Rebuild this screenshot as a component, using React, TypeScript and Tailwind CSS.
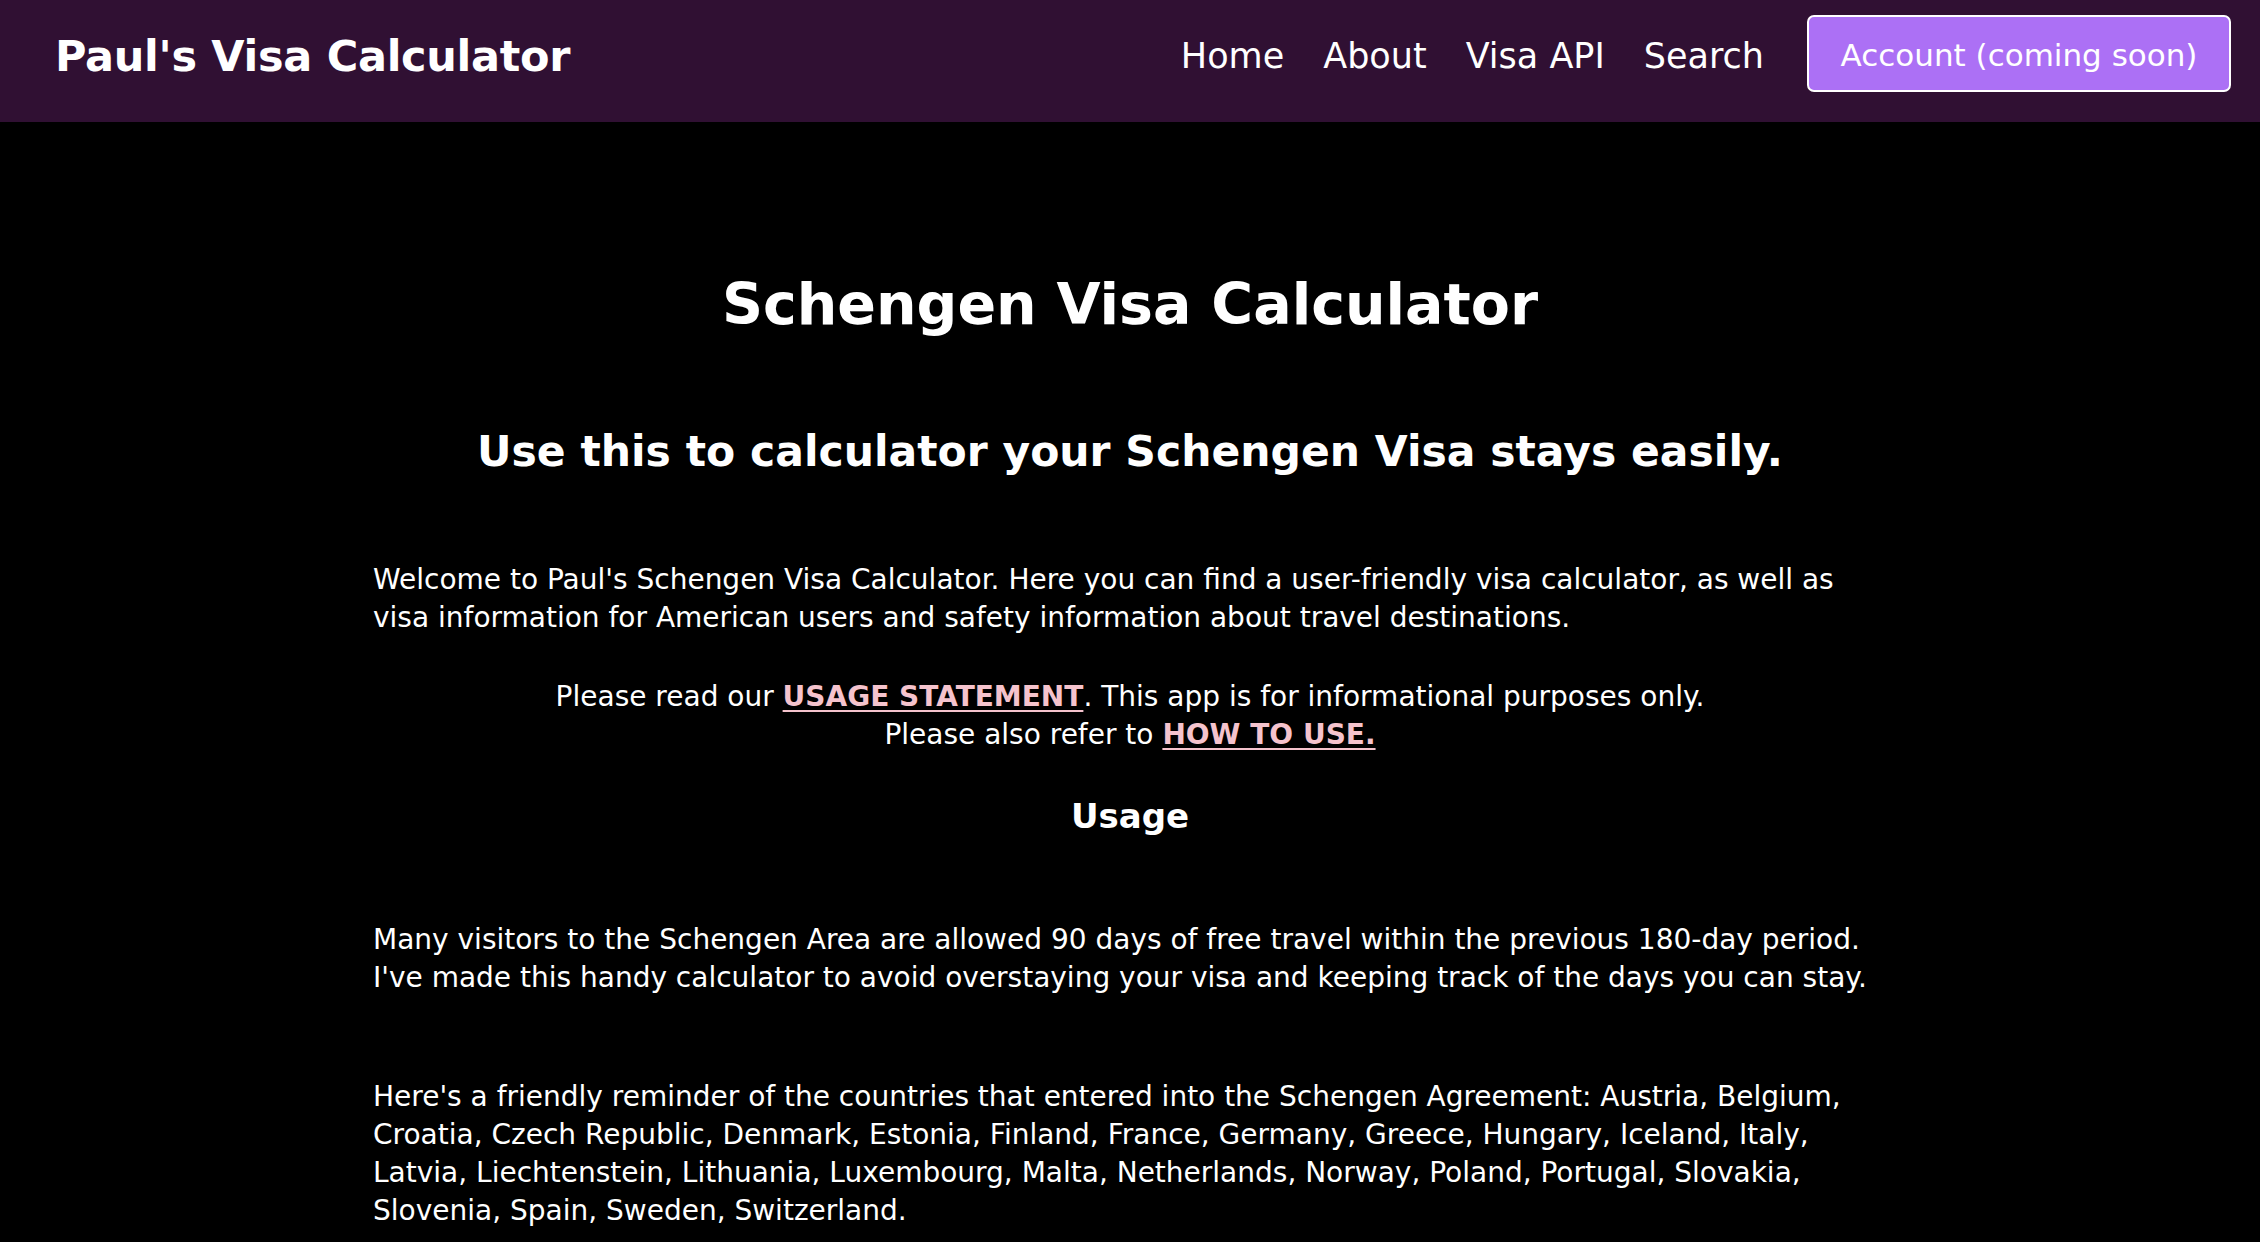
import React from "react";

const font = { fontFamily: '"DejaVu Sans", Verdana, sans-serif' };

export default function App() {
  return (
    <div className="min-h-screen bg-black text-white" style={font}>
      <header className="h-[122px] bg-[#301033] flex items-center justify-between pl-[55px] pr-[29px] pb-[15px]">
        <div className="text-[43px] font-bold leading-none tracking-[-0.3px] pt-[5px]">Paul's Visa Calculator</div>
        <nav className="flex items-center text-[35px] leading-none">
          <a className="mr-[39px] pt-[5px]">Home</a>
          <a className="mr-[39px] pt-[5px]">About</a>
          <a className="mr-[39px] pt-[5px]">Visa API</a>
          <a className="mr-[43px] pt-[5px]">Search</a>
          <button className="h-[77px] w-[424px] rounded-[7px] border-2 border-white bg-[#ac70f5] text-white text-[31px] leading-none pt-[3px]">
            Account (coming soon)
          </button>
        </nav>
      </header>
      <main className="w-[1514px] mx-auto pt-[142px] text-[28px] leading-[38px]">
        <h1 className="text-center text-[57px] font-bold leading-[80px]">Schengen Visa Calculator</h1>
        <h2 className="text-center text-[42.5px] font-bold leading-[60px] mt-[78px]">
          Use this to calculator your Schengen Visa stays easily.
        </h2>
        <p className="mt-[79px]">
          Welcome to Paul's Schengen Visa Calculator. Here you can find a user-friendly visa calculator, as well as visa information for American users and safety information about travel destinations.
        </p>
        <p className="text-center mt-[41px]">
          Please read our <a className="font-bold text-[#f5c3cd] underline underline-offset-[4px]">USAGE STATEMENT</a>. This app is for informational purposes only.
          <br />
          Please also refer to <a className="font-bold text-[#f5c3cd] underline underline-offset-[4px]">HOW TO USE.</a>
        </p>
        <h3 className="text-center text-[34px] font-bold leading-[44px] mt-[40px]">Usage</h3>
        <p className="mt-[83px]">
          Many visitors to the Schengen Area are allowed 90 days of free travel within the previous 180-day period.
          <br />
          I've made this handy calculator to avoid overstaying your visa and keeping track of the days you can stay.
        </p>
        <p className="mt-[81px]">
          Here's a friendly reminder of the countries that entered into the Schengen Agreement: Austria, Belgium, Croatia, Czech Republic, Denmark, Estonia, Finland, France, Germany, Greece, Hungary, Iceland, Italy, Latvia, Liechtenstein, Lithuania, Luxembourg, Malta, Netherlands, Norway, Poland, Portugal, Slovakia, Slovenia, Spain, Sweden, Switzerland.
        </p>
      </main>
    </div>
  );
}
